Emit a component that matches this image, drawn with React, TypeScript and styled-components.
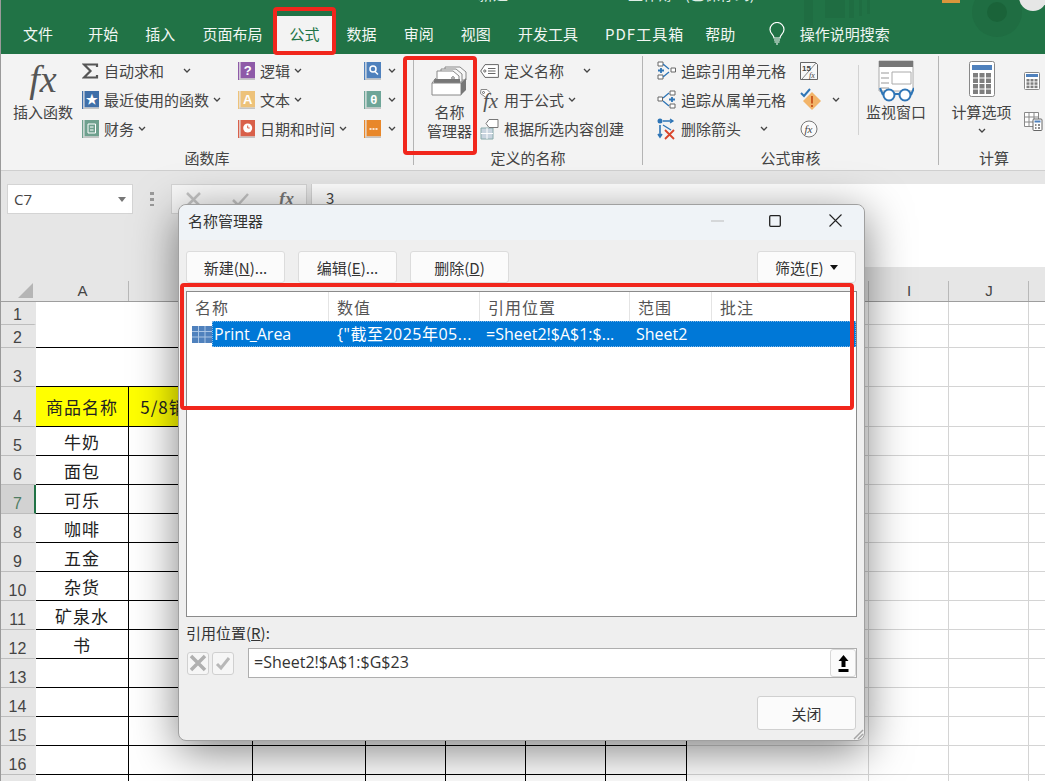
import styled, { createGlobalStyle } from 'styled-components';
import { ReactNode } from 'react';

const CJK = `"Noto Sans CJK SC", "Noto Sans", sans-serif`;
const UI = `"Open Sans", "Noto Sans CJK SC", sans-serif`;

const GlobalStyle = createGlobalStyle`
  html, body { margin: 0; padding: 0; background: #fff; }
  * { box-sizing: border-box; }
`;

/* ---------- small shared icons ---------- */

const Chevron = ({ gap = 4 }: { gap?: number }) => (
  <ChevronSvg $gap={gap} viewBox="0 0 8 5" width="8" height="5">
    <path d="M1 1l3 3 3-3" fill="none" stroke="#444" strokeWidth="1.3" />
  </ChevronSvg>
);

const Book = ({ color, children }: { color: string; children: ReactNode }) => (
  <svg width="17" height="18" viewBox="0 0 17 18">
    <rect x="0" y="0" width="1.5" height="18" fill={color} />
    <rect x="1.5" y="0" width="1" height="17" fill="#e4e4e4" />
    <rect x="2.5" y="0" width="14.5" height="16.500" fill={color} />
    <rect x="1.5" y="16.500" width="15.500" height="1.500" fill="#c4c4c4" />
    {children}
  </svg>
);

const BookGlyph = ({ t }: { t: string }) => (
  <text x="9.7" y="13.2" fontSize="13" fontWeight="700" fill="#fff" textAnchor="middle" fontFamily="Liberation Sans, sans-serif">{t}</text>
);

const SumIcon = () => (
  <svg width="17" height="16" viewBox="0 0 17 16">
    <path d="M15 4V1.500H2L8.500 8 2 14.500h13V12" fill="none" stroke="#555" strokeWidth="2.200" />
  </svg>
);

const TagIcon = () => (
  <svg width="19" height="14" viewBox="0 0 19 14">
    <path d="M5 .6h13.400v12.800H5L.7 7z" fill="#fff" stroke="#666" />
    <circle cx="4.800" cy="7" r="1.100" fill="none" stroke="#666" />
    <path d="M8 4.500h7.500M8 7h7.500M8 9.500h7.500" stroke="#666" />
  </svg>
);

const UseFxIcon = () => (
  <svg width="20" height="24" viewBox="0 0 20 24">
    <path d="M1 1.500h6l3 3-4 5-5.500-4z" fill="#fff" stroke="#888" />
    <circle cx="3.500" cy="4.500" r="1" fill="none" stroke="#666" />
    <text x="3" y="20" fontSize="21" fontStyle="italic" fontFamily="Liberation Serif, serif" fill="#555">fx</text>
  </svg>
);

const CreateIcon = () => (
  <svg width="20" height="22" viewBox="0 0 20 22">
    <path d="M1 10h12v11H1z" fill="#c9d4df" stroke="#8aa" />
    <path d="M1 15.500h12M7 10v11" stroke="#fff" />
    <path d="M9 1.500h9v8H9l-3-4z" fill="#fff" stroke="#777" />
  </svg>
);

const TraceA = () => (
  <svg width="19" height="19" viewBox="0 0 19 19">
    <path d="M1 1h5v4H1zM1 14h5v4H1zM14 7h4.500v4H14z" fill="#fff" stroke="#666" />
    <path d="M6 3l6 5M6 16l6-5" stroke="#2e75b6" strokeWidth="1.300" />
    <path d="M1 9.500h6M4 7v5" stroke="#2e75b6" strokeWidth="1.800" />
  </svg>
);

const TraceB = () => (
  <svg width="19" height="19" viewBox="0 0 19 19">
    <path d="M1 7h4.500v4H1zM13 1h5v4h-5zM13 14h5v4h-5z" fill="#fff" stroke="#666" />
    <path d="M6 8l6-5M6 11l6 5" stroke="#2e75b6" strokeWidth="1.300" />
    <path d="M12 9.500h6M15 7v5" stroke="#2e75b6" strokeWidth="1.800" />
  </svg>
);

const RemoveArrows = () => (
  <svg width="19" height="22" viewBox="0 0 19 22">
    <circle cx="3" cy="3" r="2.500" fill="#2e75b6" />
    <path d="M3 7v12M1 16l2 3 2-3" fill="none" stroke="#2e75b6" strokeWidth="1.600" />
    <path d="M6 3h10M13 1l3 2-3 2M6 7l8 5" fill="none" stroke="#2e75b6" strokeWidth="1.300" />
    <path d="M8 12l9 9M17 12l-9 9" stroke="#d9452b" strokeWidth="1.800" />
  </svg>
);

const ShowFormulas = () => (
  <svg width="18" height="18" viewBox="0 0 18 18">
    <path d="M.5.5h15l2 2v15H.5z" fill="#f8f8f8" stroke="#666" />
    <path d="M16 1L2 17" stroke="#888" />
    <text x="2" y="9" fontSize="8" fontWeight="700" fontFamily="Liberation Sans, sans-serif" fill="#444">15</text>
    <text x="9" y="16" fontSize="8" fontStyle="italic" fontFamily="Liberation Serif, serif" fill="#444">fx</text>
  </svg>
);

const ErrorCheck = () => (
  <svg width="22" height="24" viewBox="0 0 22 24">
    <path d="M12 4l9 9-9 9-9-9z" fill="#f2b469" />
    <path d="M12 8v7.500M12 17v2" stroke="#c8511b" strokeWidth="1.800" />
    <path d="M1 5l3 3 6-7" fill="none" stroke="#2e75b6" strokeWidth="2" />
  </svg>
);

const EvalFx = () => (
  <svg width="18" height="18" viewBox="0 0 18 18">
    <circle cx="9" cy="9" r="8" fill="#fafafa" stroke="#777" />
    <text x="4.500" y="13" fontSize="11" fontStyle="italic" fontFamily="Liberation Serif, serif" fill="#444">fx</text>
  </svg>
);

const NameBoxIcon = () => (
  <svg width="37" height="30" viewBox="0 0 37 30">
    <path d="M14 1h15l6 5v8H14z" fill="#f7f7f7" stroke="#888" />
    <path d="M10 3h15l6 5v8H10z" fill="#f7f7f7" stroke="#888" />
    <path d="M6 5h16l6 5v9H6z" fill="#fff" stroke="#888" />
    <circle cx="22" cy="12" r="1.300" fill="none" stroke="#777" />
    <path d="M3 13h26v4H3z" fill="#777" />
    <path d="M1 17h29v12H1z" fill="#fff" stroke="#888" />
    <path d="M30 17l5-5v12l-5 5z" fill="#777" />
    <path d="M1 17l4-5" stroke="#888" />
  </svg>
);

const WatchIcon = () => (
  <svg width="36" height="42" viewBox="0 0 36 42">
    <path d="M1 1h34v30H1z" fill="#fff" stroke="#aaa" />
    <path d="M1 1h34v6H1z" fill="#777" />
    <path d="M14 12h19v12H14z" fill="#fff" stroke="#aaa" />
    <path d="M3 13h8M3 18h8M3 23h8M3 28h8" stroke="#999" />
    <circle cx="11" cy="35" r="5.500" fill="#fff" stroke="#2e75b6" strokeWidth="2" />
    <circle cx="27" cy="35" r="5.500" fill="#fff" stroke="#2e75b6" strokeWidth="2" />
    <path d="M16 34h6M5 35l-3-7M33 35l3-7" stroke="#2e75b6" strokeWidth="2" fill="none" />
  </svg>
);

const CalcBig = () => (
  <svg width="26" height="36" viewBox="0 0 26 36">
    <rect x=".5" y=".5" width="25" height="35" rx="2" fill="#fff" stroke="#888" />
    <rect x="3" y="4" width="20" height="5" fill="#4f81bd" />
    {[0, 1, 2, 3].map((r) => [0, 1, 2].map((c) => (
      <rect key={`${r}${c}`} x={4 + c * 6.5} y={12 + r * 5.5} width="5" height="4.500" fill="#7f7f7f" />
    )))}
  </svg>
);

const CalcSmall = () => (
  <svg width="16" height="18" viewBox="0 0 16 18">
    <rect x=".5" y=".5" width="15" height="17" rx="1" fill="#fff" stroke="#888" />
    <rect x="2" y="2" width="12" height="3" fill="#4f81bd" />
    {[0, 1, 2].map((r) => [0, 1, 2].map((c) => (
      <rect key={`${r}${c}`} x={2.5 + c * 4} y={7 + r * 3.3} width="3" height="2.500" fill="#7f7f7f" />
    )))}
  </svg>
);

const CalcSheet = () => (
  <svg width="19" height="19" viewBox="0 0 19 19">
    <path d="M.5.5h14v14H.5zM.5 5h14M.5 10h14M5 .5v14M10 .5v14" fill="#fff" stroke="#888" />
    <rect x="9" y="7" width="9" height="11.500" rx="1" fill="#fff" stroke="#666" />
    <rect x="10.500" y="8.500" width="6" height="2" fill="#4f81bd" />
    <path d="M11 13h1.500M14 13h2M11 16h1.500M14 16h2" stroke="#666" strokeWidth="1.500" />
  </svg>
);

const Bulb = () => (
  <svg width="16" height="23" viewBox="0 0 16 23">
    <path d="M5 16c0-3-4-4.500-4-8.500a7 7 0 0 1 14 0c0 4-4 5.500-4 8.500z" fill="none" stroke="#fff" strokeWidth="1.200" />
    <path d="M5 18h6M5.500 20h5M7 22h2" stroke="#fff" strokeWidth="1.200" />
  </svg>
);

const TitleArt = () => (
  <ArtSvg viewBox="0 0 260 54" width="260" height="54">
    <g fill="#1f6d42">
      <rect x="19" y="0" width="9" height="26" />
      <rect x="40" y="0" width="20" height="18" />
      <rect x="64" y="0" width="5" height="18" />
      <rect x="74" y="0" width="3" height="16" />
      <rect x="82" y="0" width="3" height="14" />
    </g>
    <circle cx="212" cy="12" r="25" fill="#1f6d42" />
    <circle cx="212" cy="12" r="10" fill="#1a6339" />
    <rect x="157" y="0" width="18" height="3" fill="#d9963c" />
    <circle cx="248" cy="-3" r="14" fill="#e6e6e6" />
  </ArtSvg>
);

/* ---------- ribbon ---------- */

const Cmd = ({ icon, label, gap, noChevron }: { icon: ReactNode; label?: string; gap?: number; noChevron?: boolean }) => (
  <CmdRow>
    <CmdIcon>{icon}</CmdIcon>
    {label && <CmdLabel>{label}</CmdLabel>}
    {!noChevron && <Chevron gap={gap} />}
  </CmdRow>
);

const tabs = ['文件', '开始', '插入', '页面布局', '公式', '数据', '审阅', '视图', '开发工具', 'PDF工具箱', '帮助'];

const Ribbon = () => (
  <RibbonBar>
    <Group $w={413}>
      <GroupBody>
        <BigButton $w={70} $ml={7}>
          <BigIcon><FxBig>fx</FxBig></BigIcon>
          <BigLabel>插入函数</BigLabel>
        </BigButton>
        <CmdCol $w={156} $ml={4}>
          <Cmd icon={<SumIcon />} label="自动求和" gap={19} />
          <Cmd icon={<Book color="#3f6fa8"><BookGlyph t="★" /></Book>} label="最近使用的函数" />
          <Cmd icon={<Book color="#6fa08e"><path d="M6 4h7.500v9H6zM8 7h3.500M8 10h3.500" fill="none" stroke="#fff" /></Book>} label="财务" />
        </CmdCol>
        <CmdCol $w={126}>
          <Cmd icon={<Book color="#8e5aa8"><BookGlyph t="?" /></Book>} label="逻辑" />
          <Cmd icon={<Book color="#edc27a"><BookGlyph t="A" /></Book>} label="文本" />
          <Cmd icon={<Book color="#d9604a"><circle cx="9.700" cy="8" r="4.500" fill="#fff" /><path d="M9.700 5.500V8h2" stroke="#d9604a" fill="none" /></Book>} label="日期和时间" />
        </CmdCol>
        <CmdCol $w={48}>
          <Cmd icon={<Book color="#4f81bd"><circle cx="9" cy="7" r="3" fill="none" stroke="#fff" strokeWidth="1.500" /><path d="M11 9.500l3 3" stroke="#fff" strokeWidth="1.500" /></Book>} gap={2} />
          <Cmd icon={<Book color="#6ea598"><BookGlyph t="θ" /></Book>} gap={2} />
          <Cmd icon={<Book color="#e8872a"><path d="M5.500 9h2M8.500 9h2M11.500 9h2" stroke="#fff" strokeWidth="1.500" /></Book>} gap={2} />
        </CmdCol>
      </GroupBody>
      <GroupLabel>函数库</GroupLabel>
    </Group>

    <Group $w={229}>
      <GroupBody>
        <BigButton $w={57} $ml={7}>
          <BigIcon $shift={4}><NameBoxIcon /></BigIcon>
          <BigLabel>名称</BigLabel>
          <BigLabel>管理器</BigLabel>
        </BigButton>
        <CmdCol $w={160} $ml={2} $icon={24}>
          <Cmd icon={<TagIcon />} label="定义名称" gap={19} />
          <Cmd icon={<UseFxIcon />} label="用于公式" />
          <Cmd icon={<CreateIcon />} label="根据所选内容创建" noChevron />
        </CmdCol>
      </GroupBody>
      <GroupLabel>定义的名称</GroupLabel>
    </Group>

    <Group $w={296}>
      <GroupBody>
        <CmdCol $w={143} $ml={14} $icon={24}>
          <Cmd icon={<TraceA />} label="追踪引用单元格" noChevron />
          <Cmd icon={<TraceB />} label="追踪从属单元格" noChevron />
          <Cmd icon={<RemoveArrows />} label="删除箭头" gap={19} />
        </CmdCol>
        <CmdCol $w={58}>
          <Cmd icon={<ShowFormulas />} noChevron />
          <Cmd icon={<ErrorCheck />} gap={10} />
          <Cmd icon={<EvalFx />} noChevron />
        </CmdCol>
        <SubDivider />
        <BigButton $w={74}>
          <BigIcon $shift={4}><WatchIcon /></BigIcon>
          <BigLabel>监视窗口</BigLabel>
        </BigButton>
      </GroupBody>
      <GroupLabel>公式审核</GroupLabel>
    </Group>

    <Group $w={110} $last>
      <GroupBody>
        <BigButton $w={85}>
          <BigIcon><CalcBig /></BigIcon>
          <BigLabel>计算选项</BigLabel>
          <CalcChevron><Chevron gap={0} /></CalcChevron>
        </BigButton>
        <SideIcons><CalcSmall /><CalcSheet /></SideIcons>
      </GroupBody>
      <GroupLabel>计算</GroupLabel>
    </Group>
  </RibbonBar>
);

/* ---------- sheet ---------- */

const columns = [
  { name: 'A', w: 93 }, { name: 'B', w: 124 }, { name: 'C', w: 113 }, { name: 'D', w: 80 },
  { name: 'E', w: 80 }, { name: 'F', w: 80 }, { name: 'G', w: 81 }, { name: 'H', w: 182 },
  { name: 'I', w: 80 }, { name: 'J', w: 80 }, { name: 'K', w: 17 },
];
const rowHeights = [23, 23, 39, 40, 29, 29, 29, 29, 29, 29, 29, 29, 29, 29, 29, 29, 29];
const goods = ['牛奶', '面包', '可乐', '咖啡', '五金', '杂货', '矿泉水', '书'];
const plainCols = columns.slice(7);
const tableCols = columns.slice(0, 7);

const cellText = (row: number, col: string) => {
  if (row === 4 && col === 'A') return '商品名称';
  if (row === 4 && col === 'B') return '5/8销售数量';
  if (row >= 5 && row <= 12 && col === 'A') return goods[row - 5];
  return '';
};

const Sheet = () => (
  <SheetGrid>
    <CornerCell><CornerMark /></CornerCell>
    {columns.map((c) => <ColHead key={c.name}>{c.name === 'H' || c.name === 'K' ? '' : c.name}</ColHead>)}
    {rowHeights.map((_, i) => {
      const row = i + 1;
      return [
        <RowHead key={`h${row}`} $active={row === 7}>{row}</RowHead>,
        row === 1 && <MergedCell key="m1" $rows={2} />,
        row === 3 && <MergedCell key="m3" $rows={1} />,
        row >= 4 && tableCols.map((c) => (
          <TableCell key={`${c.name}${row}`} $yellow={row === 4}>{cellText(row, c.name)}</TableCell>
        )),
        plainCols.map((c) => <PlainCell key={`${c.name}${row}`} />),
      ];
    })}
  </SheetGrid>
);

/* ---------- dialog ---------- */

const Dialog = () => (
  <DialogBox>
    <DialogTitle>
      <span>名称管理器</span>
      <WinButtons>
        <svg width="13" height="2" viewBox="0 0 13 2"><path d="M0 1h13" stroke="#bbb" /></svg>
        <svg width="12" height="12" viewBox="0 0 12 12"><rect x=".7" y=".7" width="10.600" height="10.600" rx="1" fill="none" stroke="#222" strokeWidth="1.300" /></svg>
        <svg width="13" height="13" viewBox="0 0 13 13"><path d="M.5.5l12 12M12.500.5l-12 12" stroke="#222" strokeWidth="1.100" /></svg>
      </WinButtons>
    </DialogTitle>
    <ButtonRow>
      <PlainButton>新建(<u>N</u>)...</PlainButton>
      <PlainButton>编辑(<u>E</u>)...</PlainButton>
      <PlainButton>删除(<u>D</u>)</PlainButton>
      <FilterButton>筛选(<u>F</u>) <FilterCaret /></FilterButton>
    </ButtonRow>
    <NameList>
      <ListHead>
        <span>名称</span><span>数值</span><span>引用位置</span><span>范围</span><span>批注</span>
      </ListHead>
      <ListRow>
        <RowIcon>
          <svg width="20" height="17" viewBox="0 0 20 17">
            <rect width="20" height="17" fill="#4f81bd" />
            <path d="M0 5.500h20M0 11h20M6.500 0v17M13 0v17" stroke="#a9c4e4" />
          </svg>
        </RowIcon>
        <SelectedBand>
          <span>Print_Area</span>
          <span>{'{"截至2025年05...'}</span>
          <span>=Sheet2!$A$1:$...</span>
          <span>Sheet2</span>
          <span />
        </SelectedBand>
      </ListRow>
    </NameList>
    <RefLabel>引用位置(<u>R</u>):</RefLabel>
    <RefRow>
      <RefIcon>
        <svg width="18" height="18" viewBox="0 0 18 18"><path d="M2 2l14 14M16 2L2 16" stroke="#b0b0b0" strokeWidth="3.500" /></svg>
      </RefIcon>
      <RefIcon>
        <svg width="18" height="18" viewBox="0 0 18 18"><path d="M3 10l4 4 8-10" fill="none" stroke="#b8b8b8" strokeWidth="3" /></svg>
      </RefIcon>
      <RefInput>
        <RefText>=Sheet2!$A$1:$G$23</RefText>
        <Collapse>
          <svg width="11" height="17" viewBox="0 0 11 17"><path d="M5.500 0L10.500 6H7.500V12H3.500V6H.5zM.5 14h10v3H.5z" fill="#000" /></svg>
        </Collapse>
      </RefInput>
    </RefRow>
    <DialogFoot><CloseButton>关闭</CloseButton></DialogFoot>
    <Grip>
      <svg width="11" height="11" viewBox="0 0 11 11"><path d="M1 10l9-9M5 10l5-5" stroke="#a5a5a5" strokeWidth="1.500" /></svg>
    </Grip>
  </DialogBox>
);

export default function App() {
  return (
    <>
      <GlobalStyle />
      <Window>
        <HeaderBand>
          <TitleArt />
          <TitleStrip>
            <TitleText $w={150}>新建</TitleText>
            <TitleText $w={130}>工作簿1 (已保存到)</TitleText>
          </TitleStrip>
          <TabBar>
            {tabs.map((t) => <Tab key={t} $active={t === '公式'} $first={t === '文件'} $wide={t === 'PDF工具箱'}>{t}</Tab>)}
            <SearchHint><Bulb /><span>操作说明搜索</span></SearchHint>
          </TabBar>
        </HeaderBand>
        <Ribbon />
        <FormulaBar>
          <NameBox>C7<NameCaret /></NameBox>
          <Grabber />
          <FxButtons>
            <svg width="15" height="15" viewBox="0 0 15 15"><path d="M1 1l13 13M14 1L1 14" stroke="#c4c4c4" strokeWidth="2.500" /></svg>
            <svg width="17" height="15" viewBox="0 0 17 15"><path d="M1 8l5 5L16 2" fill="none" stroke="#c4c4c4" strokeWidth="2.500" /></svg>
            <FxSmall>fx</FxSmall>
          </FxButtons>
          <FormulaInput>3</FormulaInput>
        </FormulaBar>
        <Sheet />
        <Dialog />
        <RedMark $x={272} $y={7} $w={63} $h={48} />
        <RedMark $x={402} $y={56} $w={74} $h={99} />
        <RedMark $x={179} $y={283} $w={674} $h={127} />
      </Window>
    </>
  );
}

/* ---------- styles ---------- */

const Window = styled.div`
  position: relative;
  width: 1045px;
  height: 781px;
  overflow: hidden;
  display: flex;
  flex-direction: column;
  background: #fff;
  font-family: ${CJK};
  color: #333;
  border-left: 1px solid #9a9a9a;
`;

const HeaderBand = styled.div`
  position: relative;
  flex-shrink: 0;
  background: #217346;
`;

const TitleStrip = styled.div`
  position: relative;
  height: 16px;
  padding-left: 477px;
  display: flex;
  overflow: hidden;
`;

const TitleText = styled.div<{ $w: number }>`
  width: ${(p) => p.$w}px;
  font-size: 15px;
  line-height: 16px;
  margin-top: -14px;
  color: #dfeee6;
  white-space: nowrap;
`;

const ArtSvg = styled.svg`
  position: absolute;
  right: 0;
  top: 0;
`;

const TabBar = styled.div`
  position: relative;
  height: 38px;
  display: flex;
  padding-left: 8.5px;
`;

const Tab = styled.div<{ $active?: boolean; $first?: boolean; $wide?: boolean }>`
  padding: 0 13.55px 4px;
  margin-right: ${(p) => (p.$first ? 8 : p.$wide ? -6 : 0)}px;
  display: flex;
  align-items: center;
  font-size: 15px;
  letter-spacing: ${(p) => (p.$wide ? 1 : 0)}px;
  color: ${(p) => (p.$active ? '#217346' : '#f2f7f4')};
  background: ${(p) => (p.$active ? '#f3f3f3' : 'transparent')};
`;

const SearchHint = styled.div`
  display: flex;
  align-items: center;
  gap: 15px;
  margin-left: 20px;
  padding-bottom: 4px;
  color: #eef5f1;
  font-size: 15px;
`;

const RibbonBar = styled.div`
  height: 117px;
  flex-shrink: 0;
  background: #f3f3f3;
  border-bottom: 1px solid #cfcfcf;
  display: flex;
`;

const Group = styled.div<{ $w: number; $last?: boolean }>`
  width: ${(p) => p.$w}px;
  flex-shrink: 0;
  margin: 2px 0 5px;
  display: flex;
  flex-direction: column;
  border-right: ${(p) => (p.$last ? 'none' : '1px solid #b4b4b4')};
`;

const GroupBody = styled.div`
  flex: none;
  height: 87px;
  display: flex;
`;

const GroupLabel = styled.div`
  height: 26px;
  margin-top: 2px;
  text-align: center;
  font-size: 15px;
  line-height: 26px;
  color: #444;
`;

const BigButton = styled.div<{ $w: number; $ml?: number }>`
  width: ${(p) => p.$w}px;
  margin-left: ${(p) => p.$ml ?? 0}px;
  flex-shrink: 0;
  display: flex;
  flex-direction: column;
  align-items: center;
`;

const BigIcon = styled.div<{ $shift?: number }>`
  height: 46px;
  padding-top: ${(p) => p.$shift ?? 0}px;
  display: flex;
  align-items: center;
  justify-content: center;
`;

const BigLabel = styled.div`
  font-size: 15px;
  line-height: 19px;
  color: #444;
  white-space: nowrap;
`;

const FxBig = styled.span`
  font-family: "Liberation Serif", serif;
  font-style: italic;
  font-size: 38px;
  line-height: 40px;
  color: #555;
`;

const CalcChevron = styled.div`
  height: 19px;
  display: flex;
  align-items: center;
`;

const CmdCol = styled.div<{ $w: number; $ml?: number; $icon?: number }>`
  --icon-w: ${(p) => p.$icon ?? 22}px;
  width: ${(p) => p.$w}px;
  margin-left: ${(p) => p.$ml ?? 0}px;
  flex-shrink: 0;
`;

const CmdRow = styled.div`
  height: 29px;
  display: flex;
  align-items: center;
`;

const CmdIcon = styled.div`
  width: var(--icon-w);
  display: flex;
  align-items: center;
  flex-shrink: 0;
`;

const CmdLabel = styled.span`
  font-size: 15px;
  color: #444;
  white-space: nowrap;
`;

const ChevronSvg = styled.svg<{ $gap: number }>`
  margin-left: ${(p) => p.$gap}px;
  flex-shrink: 0;
`;

const SubDivider = styled.div`
  width: 1px;
  height: 70px;
  margin-top: 9px;
  background: #d2d2d2;
`;

const SideIcons = styled.div`
  padding-top: 16px;
  display: flex;
  flex-direction: column;
  gap: 22px;
`;

const FormulaBar = styled.div`
  height: 96px;
  flex-shrink: 0;
  background: #e6e6e6;
  padding: 13px 0 0 6px;
  display: flex;
  align-items: flex-start;
`;

const NameBox = styled.div`
  width: 126px;
  height: 30px;
  background: #fff;
  border: 1px solid #d4d4d4;
  padding: 0 6px;
  display: flex;
  align-items: center;
  justify-content: space-between;
  font-family: ${UI};
  font-size: 15px;
  color: #444;
`;

const NameCaret = styled.i`
  width: 0;
  height: 0;
  border: 4px solid transparent;
  border-top: 5px solid #777;
  border-bottom: 0;
`;

const Grabber = styled.div`
  width: 4px;
  height: 14px;
  margin: 8px 17px 0 17px;
  background: repeating-linear-gradient(#9a9a9a 0 3px, transparent 3px 6px);
`;

const FxButtons = styled.div`
  width: 136px;
  height: 30px;
  background: #f8f8f8;
  border: 1px solid #d4d4d4;
  padding: 0 12px 0 14px;
  display: flex;
  align-items: center;
  justify-content: space-between;
`;

const FxSmall = styled.span`
  font-family: "Liberation Serif", serif;
  font-style: italic;
  font-weight: 700;
  font-size: 18px;
  color: #777;
`;

const FormulaInput = styled.div`
  flex: 1;
  height: 83px;
  margin-left: 4px;
  background: #fff;
  padding: 3px 0 0 14px;
  font-size: 15px;
  color: #444;
  border-left: 1px solid #d4d4d4;
`;

const SheetGrid = styled.div`
  flex: 1;
  min-height: 0;
  display: grid;
  grid-template-columns: 35px ${columns.map((c) => `${c.w}px`).join(' ')};
  grid-template-rows: 35px ${rowHeights.map((h) => `${h}px`).join(' ')};
  background: #fff;
`;

const CornerCell = styled.div`
  background: #e6e6e6;
  border-bottom: 1px solid #9e9e9e;
  position: relative;
`;

const CornerMark = styled.i`
  position: absolute;
  right: 3px;
  bottom: 3px;
  width: 0;
  height: 0;
  border-style: solid;
  border-width: 0 0 15px 15px;
  border-color: transparent transparent #b5b5b5 transparent;
`;

const ColHead = styled.div`
  background: #e6e6e6;
  border-bottom: 1px solid #9e9e9e;
  display: flex;
  align-items: flex-end;
  justify-content: center;
  font-family: "Liberation Sans", sans-serif;
  font-size: 15px;
  line-height: 20px;
  color: #444;
  position: relative;
  &::after {
    content: '';
    position: absolute;
    right: 0;
    bottom: 0;
    width: 1px;
    height: 20px;
    background: #b8b8b8;
  }
`;

const RowHead = styled.div<{ $active?: boolean }>`
  background: ${(p) => (p.$active ? '#d2d2d2' : '#e6e6e6')};
  color: ${(p) => (p.$active ? '#4f7d63' : '#444')};
  border-bottom: 1px solid #bdbdbd;
  border-right: 2px solid ${(p) => (p.$active ? '#217346' : 'transparent')};
  display: flex;
  align-items: flex-end;
  justify-content: center;
  font-family: "Liberation Sans", sans-serif;
  font-size: 16px;
  line-height: 19px;
`;

const MergedCell = styled.div<{ $rows: number }>`
  grid-column: span 7;
  grid-row: span ${(p) => p.$rows};
  border-bottom: 1px solid #000;
`;

const TableCell = styled.div<{ $yellow?: boolean }>`
  background: ${(p) => (p.$yellow ? '#ffff00' : '#fff')};
  border-right: 1px solid #000;
  border-bottom: 1px solid #000;
  display: flex;
  align-items: center;
  justify-content: center;
  font-size: 17px;
  letter-spacing: 1px;
  white-space: nowrap;
  overflow: hidden;
  color: #222;
`;

const PlainCell = styled.div`
  border-right: 1px solid #d4d4d4;
  border-bottom: 1px solid #d4d4d4;
`;

const DialogBox = styled.div`
  position: absolute;
  left: 177px;
  top: 204px;
  width: 687px;
  height: 537px;
  background: #efefef;
  border: 1px solid #a0a0a0;
  border-radius: 8px;
  box-shadow: 0 10px 45px rgba(0, 0, 0, 0.5);
  padding: 0 7px 0 7px;
  display: flex;
  flex-direction: column;
  font-size: 15px;
  color: #333;
`;

const DialogTitle = styled.div`
  height: 35px;
  margin: 0 -7px;
  padding: 0 22px 4px 9px;
  background: #eff3f7;
  border-radius: 8px 8px 0 0;
  display: flex;
  align-items: center;
  justify-content: space-between;
  flex-shrink: 0;
`;

const WinButtons = styled.div`
  display: flex;
  align-items: center;
  gap: 45px;
  svg:nth-child(2) { margin-right: 3px; }
`;

const ButtonRow = styled.div`
  margin-top: 11px;
  padding-right: 1px;
  display: flex;
  gap: 13px;
  flex-shrink: 0;
`;

const PlainButton = styled.div`
  width: 99px;
  height: 32px;
  background: #fbfbfb;
  border: 1px solid #dcdcdc;
  border-radius: 3px;
  display: flex;
  align-items: center;
  justify-content: center;
  white-space: pre;
`;

const FilterButton = styled(PlainButton)`
  margin-left: auto;
`;

const FilterCaret = styled.i`
  width: 0;
  height: 0;
  margin-left: 3px;
  border: 4px solid transparent;
  border-top: 5px solid #111;
  border-bottom: 0;
`;

const NameList = styled.div`
  margin-top: 8px;
  height: 326px;
  flex-shrink: 0;
  background: #fff;
  border: 1px solid #8b8b8b;
`;

const ListHead = styled.div`
  height: 29px;
  display: grid;
  grid-template-columns: 142px 151px 150px 82px 1fr;
  font-size: 16px;
  letter-spacing: 1px;
  line-height: 30px;
  color: #555;
  span {
    padding-left: 8px;
    border-right: 1px solid #e4e4e4;
  }
  span:last-child { border-right: 0; }
`;

const ListRow = styled.div`
  height: 26px;
  display: flex;
`;

const RowIcon = styled.div`
  width: 25px;
  padding: 5px 0 0 5px;
  flex-shrink: 0;
`;

const SelectedBand = styled.div`
  flex: 1;
  display: grid;
  grid-template-columns: 117px 151px 150px 82px 1fr;
  background: #0078d7;
  outline: 1px dotted #7fb6e6;
  outline-offset: -1px;
  color: #fff;
  font-family: ${UI};
  font-size: 16px;
  line-height: 26px;
  white-space: nowrap;
  span { padding-left: 6px; overflow: hidden; }
  span:first-child { padding-left: 2px; }
  span:nth-child(2) { padding-left: 8px; letter-spacing: 0.5px; }
`;

const RefLabel = styled.div`
  margin-top: 6px;
  height: 25px;
  line-height: 20px;
  flex-shrink: 0;
`;

const RefRow = styled.div`
  height: 30px;
  display: flex;
  align-items: center;
  flex-shrink: 0;
  padding-left: 1px;
  gap: 3px;
`;

const RefIcon = styled.div`
  width: 22px;
  height: 23px;
  border: 1px solid #d0d0d0;
  border-radius: 3px;
  background: #f6f6f6;
  display: flex;
  align-items: center;
  justify-content: center;
`;

const RefInput = styled.div`
  flex: 1;
  height: 30px;
  margin-left: 11px;
  padding-left: 5px;
  background: #fff;
  border: 1px solid #aeaeae;
  display: flex;
  align-items: center;
  justify-content: space-between;
  font-family: ${UI};
  font-size: 16px;
`;

const RefText = styled.span`
  margin-top: -3px;
`;

const Collapse = styled.div`
  width: 26px;
  height: 28px;
  background: #fbfbfb;
  border: 1px solid #d8d8d8;
  border-radius: 3px;
  display: flex;
  align-items: center;
  justify-content: center;
`;

const DialogFoot = styled.div`
  margin-top: 18px;
  padding-right: 1px;
  display: flex;
  justify-content: flex-end;
`;

const CloseButton = styled.div`
  width: 99px;
  height: 34px;
  background: #fbfbfb;
  border: 1px solid #d0d0d0;
  border-radius: 3px;
  display: flex;
  align-items: center;
  justify-content: center;
`;

const Grip = styled.div`
  position: absolute;
  right: 0;
  bottom: 0;
  width: 11px;
  height: 11px;
  line-height: 0;
`;

const RedMark = styled.div<{ $x: number; $y: number; $w: number; $h: number }>`
  position: absolute;
  left: ${(p) => p.$x}px;
  top: ${(p) => p.$y}px;
  width: ${(p) => p.$w}px;
  height: ${(p) => p.$h}px;
  border: 4px solid #f1261c;
  border-radius: 4px;
  pointer-events: none;
`;
